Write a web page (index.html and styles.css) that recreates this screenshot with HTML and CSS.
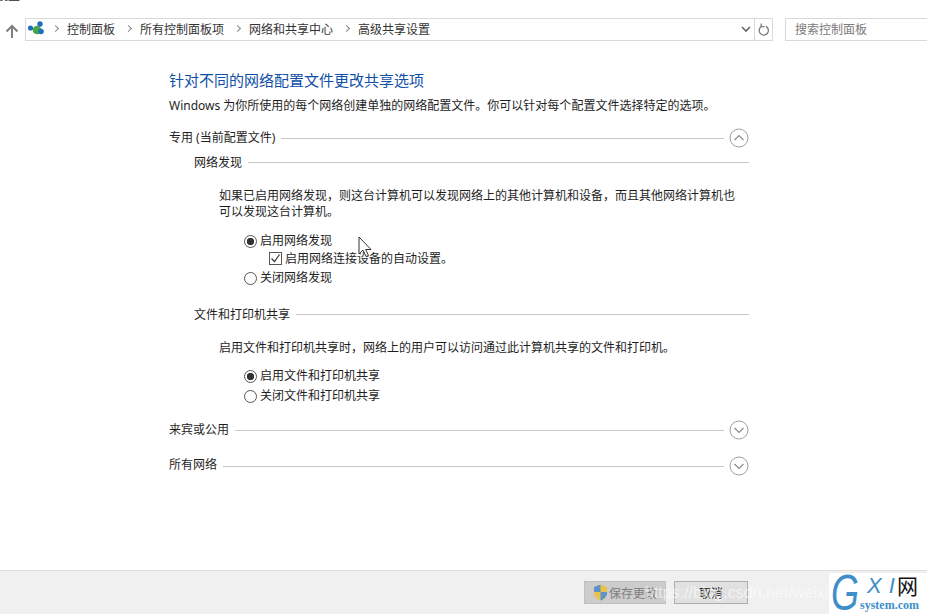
FILE: index.html
```html
<!DOCTYPE html>
<html lang="zh-CN">
<head>
    <meta charset="UTF-8">
    <title>高级共享设置</title>
    <link rel="stylesheet" href="styles.css">
</head>
<body>
    <div class="window">
        <div class="cut-title">设置</div>

        <div class="nav">
            <svg class="up" width="14" height="14" viewBox="0 0 14 14"><path d="M7 14V2M1.500 7.500L7 2l5.500 5.500" fill="none" stroke="#7f7f7f" stroke-width="2"/></svg>
            <div class="address">
                <svg class="net-icon" width="18" height="16" viewBox="0 0 18 16">
                    <circle cx="3.500" cy="7" r="2.600" fill="#1f6fc0"/>
                    <circle cx="10" cy="9" r="4.300" fill="#45a845"/>
                    <circle cx="13" cy="3" r="2.700" fill="#1f6fc0"/>
                    <circle cx="14" cy="10.500" r="2.800" fill="#1f6fc0"/>
                </svg>
                <span class="sep"></span><span class="crumb">控制面板</span>
                <span class="sep"></span><span class="crumb">所有控制面板项</span>
                <span class="sep"></span><span class="crumb">网络和共享中心</span>
                <span class="sep"></span><span class="crumb">高级共享设置</span>
                <svg class="drop" width="10" height="7" viewBox="0 0 10 7"><path d="M1 1l4 4 4-4" fill="none" stroke="#666" stroke-width="1.600"/></svg>
            </div>
            <div class="refresh">
                <svg width="12" height="14" viewBox="0 0 12 14"><path d="M4 3.200a4.600 4.600 0 1 0 4 .2M3.200 .6v3h3.200" fill="none" stroke="#7a7a7a" stroke-width="1.300"/></svg>
            </div>
            <div class="search">搜索控制面板</div>
        </div>

        <div class="main">
            <h1 class="title">针对不同的网络配置文件更改共享选项</h1>
            <p class="intro">Windows 为你所使用的每个网络创建单独的网络配置文件。你可以针对每个配置文件选择特定的选项。</p>

            <div class="head">
                <span>专用 (当前配置文件)</span><i class="rule"></i>
                <svg class="toggle" width="20" height="20" viewBox="0 0 20 20"><circle cx="10" cy="10" r="9" fill="#fff" stroke="#a0a0a0"/><path d="M5.500 12l4.500-4.500 4.500 4.500" fill="none" stroke="#8a8a8a" stroke-width="1.200"/></svg>
            </div>

            <div class="sub sub-first"><span>网络发现</span><i class="rule"></i></div>
            <p class="para">如果已启用网络发现，则这台计算机可以发现网络上的其他计算机和设备，而且其他网络计算机也<br>可以发现这台计算机。</p>
            <div class="options options-a">
                <div class="opt"><span class="radio on"></span>启用网络发现</div>
                <div class="opt opt-check">
                    <span class="check"><svg width="11" height="11" viewBox="0 0 11 11"><path d="M1.500 5.500l3 3 5-7" fill="none" stroke="#333" stroke-width="1.200"/></svg></span>启用网络连接设备的自动设置。
                </div>
                <div class="opt"><span class="radio"></span>关闭网络发现</div>
            </div>

            <div class="sub sub-second"><span>文件和打印机共享</span><i class="rule"></i></div>
            <p class="para">启用文件和打印机共享时，网络上的用户可以访问通过此计算机共享的文件和打印机。</p>
            <div class="options options-b">
                <div class="opt"><span class="radio on"></span>启用文件和打印机共享</div>
                <div class="opt"><span class="radio"></span>关闭文件和打印机共享</div>
            </div>

            <div class="head head-guest">
                <span>来宾或公用</span><i class="rule"></i>
                <svg class="toggle" width="20" height="20" viewBox="0 0 20 20"><circle cx="10" cy="10" r="9" fill="#fff" stroke="#a0a0a0"/><path d="M5.500 8l4.500 4.500L14.500 8" fill="none" stroke="#8a8a8a" stroke-width="1.200"/></svg>
            </div>
            <div class="head head-all">
                <span>所有网络</span><i class="rule"></i>
                <svg class="toggle" width="20" height="20" viewBox="0 0 20 20"><circle cx="10" cy="10" r="9" fill="#fff" stroke="#a0a0a0"/><path d="M5.500 8l4.500 4.500L14.500 8" fill="none" stroke="#8a8a8a" stroke-width="1.200"/></svg>
            </div>
        </div>

        <div class="footer">
            <div class="btn btn-off">
                <svg width="15" height="17" viewBox="0 0 15 17">
                    <path d="M7.500 .5L14 3v6c0 3.500-3 6-6.500 7.500C4 15 1 12.500 1 9V3z" fill="#e8c24a"/>
                    <path d="M7.500 .5V8H1V3zM7.500 8H14v1c0 3.500-3 6-6.500 7.500z" fill="#5d93c9"/>
                </svg>保存更改
            </div>
            <div class="btn">取消</div>
        </div>

        <!-- over the page: cursor and the screenshot's watermarks -->
        <svg class="cursor" width="15" height="22" viewBox="0 0 15 22"><path d="M1 1v17l4-4 3 6.500 2.500-1L7.700 13.500H13z" fill="#fff" stroke="#333"/></svg>
        <div class="mark">https://blog.csdn.net/weixi</div>
        <div class="logo">
            <span class="logo-g">G</span>
            <div class="logo-right">
                <div class="logo-top"><span class="logo-xi">XI</span><span class="logo-cn">网</span></div>
                <div class="logo-site">system.com</div>
            </div>
        </div>
    </div>
</body>
</html>
```

FILE: styles.css
```css
* {
    box-sizing: border-box;
}
body {
    margin: 0;
    background-color: #fff;
    color: #1e1e1e;
    font-family: "Noto Sans", "Noto Sans CJK SC", sans-serif;
    font-size: 12px;
}
.window {
    position: relative;
    width: 927px;
    height: 614px;
    overflow: hidden;
    display: flex;
    flex-direction: column;
}
.cut-title {
    height: 18px;
    margin: -13px 0 13px -4px;
    font-size: 12px;
    line-height: 18px;
}

/* address bar */
.nav {
    display: flex;
    align-items: center;
    height: 23px;
    padding-left: 5px;
    flex-shrink: 0;
}
.up {
    flex-shrink: 0;
    margin-right: 6px;
    margin-top: 3px;
}
.address {
    display: flex;
    align-items: center;
    flex-shrink: 0;
    width: 729px;
    height: 23px;
    border: 1px solid #d9d9d9;
    border-right: none;
    padding-left: 1px;
    padding-bottom: 2px;
}
.net-icon {
    margin-right: 5px;
}
.sep {
    width: 5px;
    height: 5px;
    margin-left: 3px;
    margin-right: 9px;
    border-top: 1.5px solid #888;
    border-right: 1.5px solid #888;
    transform: rotate(45deg);
}
.crumb {
    margin-right: 8px;
    color: #333;
}
.drop {
    margin-left: auto;
    margin-right: 3px;
    margin-top: 2px;
}
.refresh {
    display: flex;
    align-items: center;
    justify-content: center;
    flex-shrink: 0;
    width: 19px;
    height: 23px;
    border: 1px solid #d9d9d9;
}
.search {
    flex-shrink: 0;
    width: 145px;
    height: 23px;
    margin-left: 12px;
    padding-left: 9px;
    border: 1px solid #d9d9d9;
    color: #7a7a7a;
    line-height: 21px;
}

/* settings */
.main {
    flex: 1;
    padding: 27px 178px 0 169px;
}
.title {
    margin: 0;
    color: #0f4fa8;
    font-size: 15px;
    font-weight: 400;
    line-height: 24px;
}
.intro {
    margin: 5px 0 0;
    line-height: 18px;
    white-space: nowrap;
}
.head, .sub {
    display: flex;
    align-items: center;
    height: 20px;
    white-space: nowrap;
}
.head {
    margin-top: 12px;
}
.rule {
    flex: 1;
    height: 1px;
    margin-left: 6px;
    background-color: #c8c8c8;
}
.head .rule, .head .toggle {
    margin-top: 2px;
}
.toggle {
    margin-left: 5px;
}
.sub {
    margin-left: 25px;
}
.sub-first {
    margin-top: 5px;
}
.sub-second {
    margin-top: 17px;
}
.para {
    margin: 16px 0 0 50px;
    line-height: 16px;
    white-space: nowrap;
}
.options {
    margin-left: 75px;
}
.options-a {
    margin-top: 10px;
}
.options-b {
    margin-top: 9px;
}
.opt {
    display: flex;
    align-items: center;
    height: 20px;
    white-space: nowrap;
}
.opt-check {
    height: 18px;
    margin-left: 25px;
    margin-top: -1px;
}
.radio {
    width: 13px;
    height: 13px;
    margin-top: 2px;
    margin-right: 3px;
    border: 1px solid #555;
    border-radius: 50%;
    background-color: #fff;
}
.radio.on {
    background: radial-gradient(circle, #333 0, #333 3.4px, #fff 4px);
}
.check {
    display: flex;
    align-items: center;
    justify-content: center;
    width: 13px;
    height: 13px;
    margin-right: 3px;
    border: 1px solid #555;
}
.head-guest {
    margin-top: 14px;
}
.head-all {
    margin-top: 15px;
}
.head-all .rule, .head-all .toggle {
    margin-top: 4px;
}

/* bottom buttons */
.footer {
    display: flex;
    gap: 8px;
    height: 44px;
    flex-shrink: 0;
    padding: 10px 0 0 584px;
    background-color: #f0f0f0;
    border-top: 1px solid #dfdfdf;
}
.btn {
    display: flex;
    align-items: center;
    justify-content: center;
    width: 74px;
    height: 23px;
    border: 1px solid #adadad;
    background-color: #e1e1e1;
    color: #111;
}
.btn-off {
    width: 82px;
    gap: 1px;
    background-color: #cccccc;
    border-color: #bfbfbf;
    color: #7d7d7d;
}

/* overlays */
.cursor {
    position: absolute;
    left: 358px;
    top: 236px;
}
.mark {
    position: absolute;
    left: 645px;
    top: 584px;
    color: rgba(255, 255, 255, 0.6);
    font-family: "Liberation Sans", sans-serif;
    font-size: 16px;
    white-space: nowrap;
}
.logo {
    position: absolute;
    right: 0;
    bottom: 0;
    display: flex;
    width: 98px;
    height: 41px;
    background-color: #fff;
}
.logo-g {
    width: 29px;
    margin-left: 2px;
    color: #3d8ec9;
    font-family: "Liberation Sans", sans-serif;
    font-size: 50px;
    font-style: italic;
    line-height: 41px;
    transform: scaleX(0.72);
    transform-origin: left center;
}
.logo-right {
    flex: 1;
}
.logo-top {
    display: flex;
    align-items: center;
    height: 26px;
}
.logo-xi {
    width: 38px;
    padding-left: 7px;
    color: #3d8ec9;
    font-family: "Liberation Sans", sans-serif;
    font-size: 22px;
    font-style: italic;
    letter-spacing: 7px;
    line-height: 26px;
}
.logo-cn {
    margin-left: -1px;
    color: #111;
    font-size: 21px;
    line-height: 26px;
}
.logo-site {
    color: #3d8ec9;
    font-family: "Liberation Serif", serif;
    font-size: 12px;
    font-weight: 700;
    line-height: 13px;
}
```
